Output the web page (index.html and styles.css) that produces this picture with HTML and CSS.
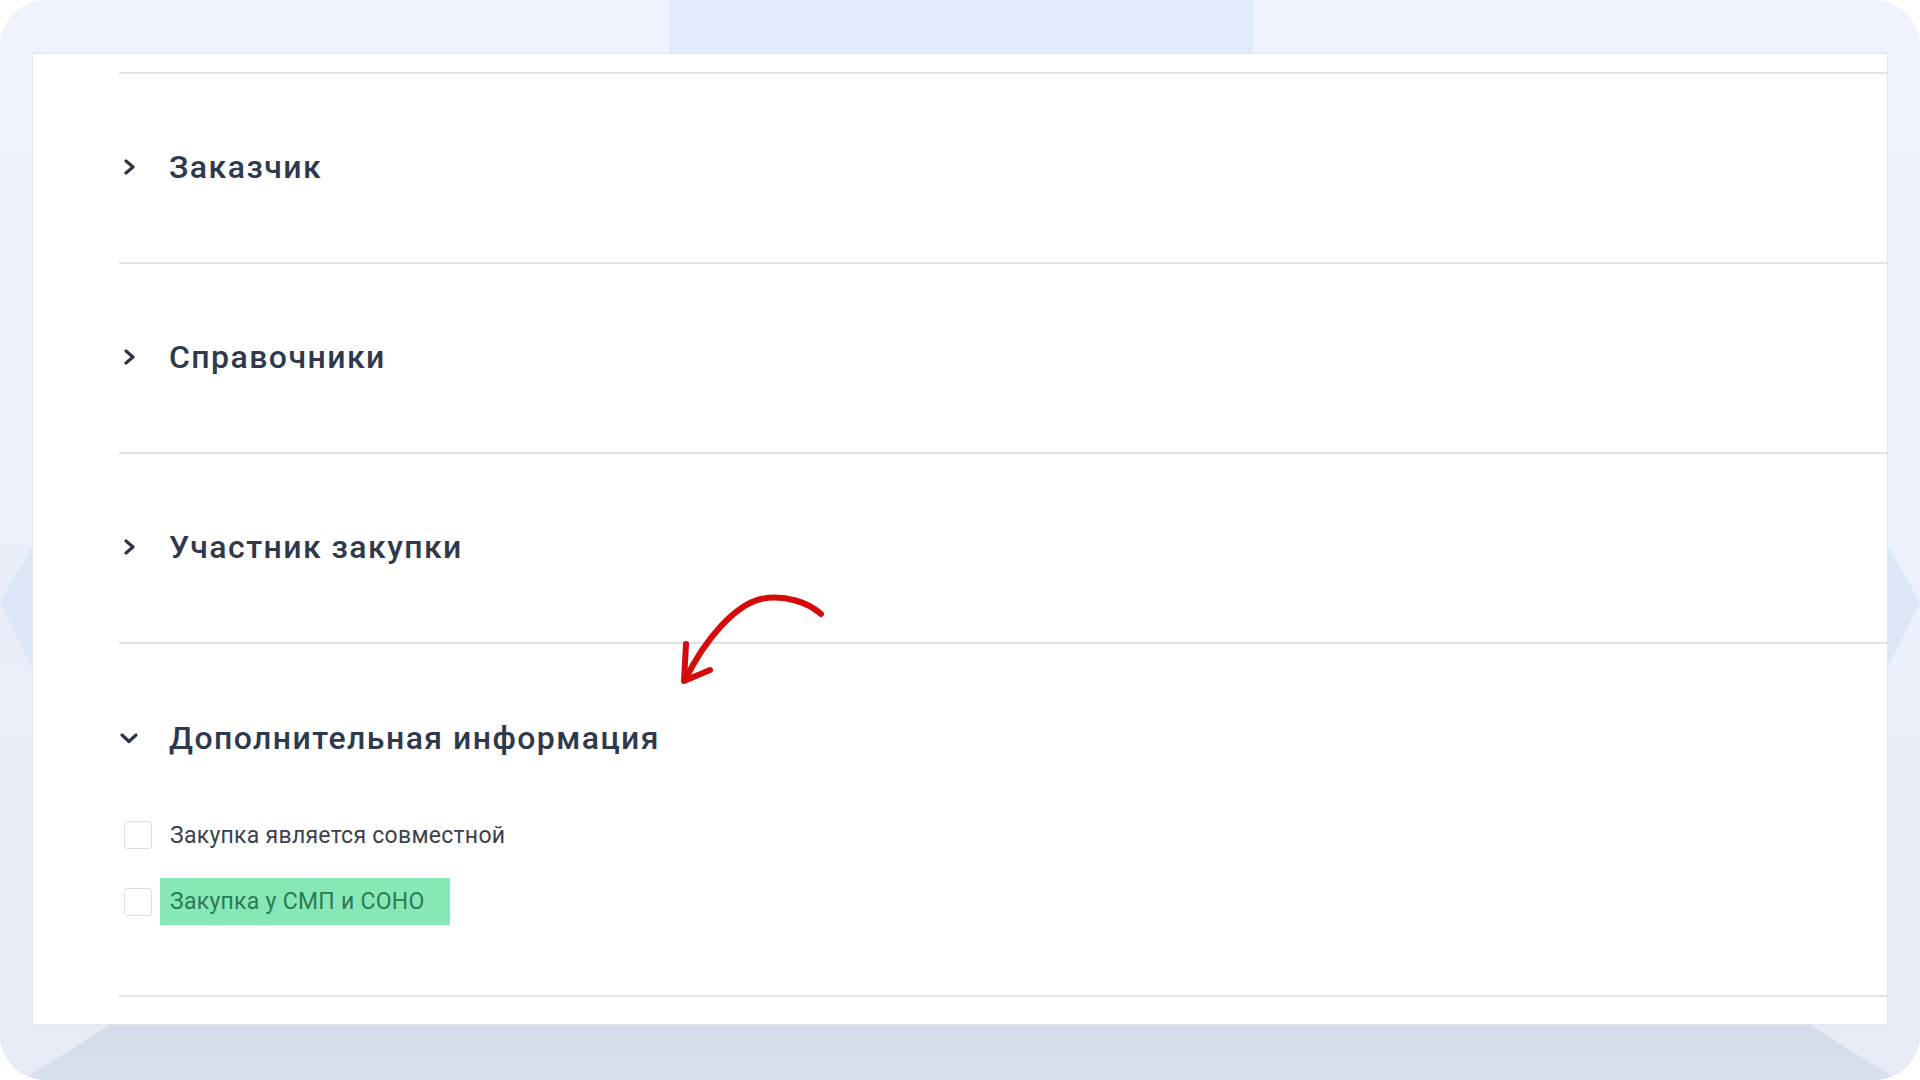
FILE: index.html
```html
<!DOCTYPE html>
<html lang="ru">
<head>
<meta charset="utf-8">
<title>Дополнительная информация</title>
<link rel="stylesheet" href="styles.css">
</head>
<body>
<div class="frame">
  <svg class="decor" width="1920" height="1080" viewBox="0 0 1920 1080" aria-hidden="true">
    <rect x="669" y="0" width="584" height="53" fill="#e2ebfb"/>
    <polygon points="0,545 32,545 32,668 0,668" fill="#e9eef8"/>
    <polygon points="32,547 0,602 32,667" fill="#dce6f6"/>
    <polygon points="1888,547 1920,602 1888,667" fill="#dce6f6"/>
    <polygon points="0,1025 110,1025 22,1080 0,1080" fill="#e6ebf6"/>
    <polygon points="1920,1025 1810,1025 1898,1080 1920,1080" fill="#e6ebf6"/>
  </svg>
  <main class="panel">
    <section class="section">
      <div class="section-head">
        <span class="chev"><svg width="14" height="16" viewBox="0 0 14 16"><path d="M3 2 L10 8 L3 14" fill="none" stroke="#2c3445" stroke-width="3.2" stroke-linecap="round" stroke-linejoin="round"/></svg></span>
        <h2 class="section-title">Заказчик</h2>
      </div>
    </section>
    <section class="section">
      <div class="section-head">
        <span class="chev"><svg width="14" height="16" viewBox="0 0 14 16"><path d="M3 2 L10 8 L3 14" fill="none" stroke="#2c3445" stroke-width="3.2" stroke-linecap="round" stroke-linejoin="round"/></svg></span>
        <h2 class="section-title">Справочники</h2>
      </div>
    </section>
    <section class="section">
      <div class="section-head">
        <span class="chev"><svg width="14" height="16" viewBox="0 0 14 16"><path d="M3 2 L10 8 L3 14" fill="none" stroke="#2c3445" stroke-width="3.2" stroke-linecap="round" stroke-linejoin="round"/></svg></span>
        <h2 class="section-title">Участник закупки</h2>
      </div>
    </section>
    <section class="section section-open">
      <div class="section-head section-head-open">
        <span class="chev"><svg width="20" height="14" viewBox="0 0 20 14"><path d="M3 4 L10 10.5 L17 4" fill="none" stroke="#2c3445" stroke-width="3.2" stroke-linecap="round" stroke-linejoin="round"/></svg></span>
        <h2 class="section-title">Дополнительная информация</h2>
      </div>
      <div class="options">
        <label class="option">
          <span class="box"></span>
          <span class="option-text">Закупка является совместной</span>
        </label>
        <label class="option option-marked">
          <span class="box"></span>
          <span class="option-text mark">Закупка у СМП и СОНО</span>
        </label>
      </div>
    </section>
    <div class="section end-line"></div>
    <svg class="arrow" width="180" height="110" viewBox="0 0 180 110" aria-hidden="true">
      <path d="M160 33 C148 22 124 13 100 18 C74 24 44 58 24 99" fill="none" stroke="#d70a0a" stroke-width="6" stroke-linecap="round"/>
      <path d="M25 63 L23 100 L49 89" fill="none" stroke="#d70a0a" stroke-width="6" stroke-linecap="round" stroke-linejoin="round"/>
    </svg>
  </main>
</div>
</body>
</html>
```
FILE: styles.css
```css
html, body {
  margin: 0;
  padding: 0;
  background: #ffffff;
}

.frame {
  position: relative;
  width: 1920px;
  height: 1080px;
  box-sizing: border-box;
  padding: 53px 32px 0 32px;
  border-radius: 46px;
  overflow: hidden;
  background:
    linear-gradient(180deg, rgba(0,0,0,0) 0, rgba(0,0,0,0) 1025px, #d4dceb 1025px, #d8e0ee 1080px),
    linear-gradient(180deg, #eef3fd 0%, #ebf0fa 55%, #e6ebf6 100%);
  font-family: Roboto, "Noto Sans", "Liberation Sans", sans-serif;
}

.decor {
  position: absolute;
  left: 0;
  top: 0;
  z-index: 0;
}

.panel {
  position: relative;
  z-index: 1;
  height: 972px;
  box-sizing: border-box;
  background: #ffffff;
  border: 1px solid #e3e6ed;
  padding: 18px 0 0 86px;
  display: flex;
  flex-direction: column;
}

.section {
  border-top: 2px solid #e2e3e9;
}

.section-head {
  height: 188px;
  box-sizing: border-box;
  padding-bottom: 2px;
  display: flex;
  align-items: center;
}

.chev {
  width: 50px;
  display: flex;
  align-items: center;
  padding-left: 4px;
  box-sizing: border-box;
}

.section-title {
  margin: 0;
  font-size: 32px;
  font-weight: 500;
  color: #2f394d;
  line-height: 38px;
  letter-spacing: 1.45px;
}

.section-head-open {
  height: auto;
  padding-top: 75px;
  padding-bottom: 0;
}

.section-head-open .chev {
  padding-left: 0;
}

.options {
  display: flex;
  flex-direction: column;
  gap: 23px;
  padding: 58px 0 70px 0;
}

.option {
  display: flex;
  align-items: center;
  height: 40px;
}

.option-marked {
  height: 47px;
}

.box {
  width: 28px;
  height: 28px;
  margin-left: 5px;
  margin-right: 8px;
  border: 1.5px solid #dadde3;
  border-radius: 3px;
  background: #ffffff;
  box-sizing: border-box;
}

.option-text {
  padding-left: 10px;
  font-size: 23px;
  letter-spacing: 0.27px;
  color: #3a414f;
  line-height: 47px;
}

.mark {
  background: #87e8b6;
  color: #2b7a56;
  padding-right: 25px;
  height: 47px;
}

.end-line {
  height: 0;
}

.arrow {
  position: absolute;
  left: 628px;
  top: 527px;
}
```
